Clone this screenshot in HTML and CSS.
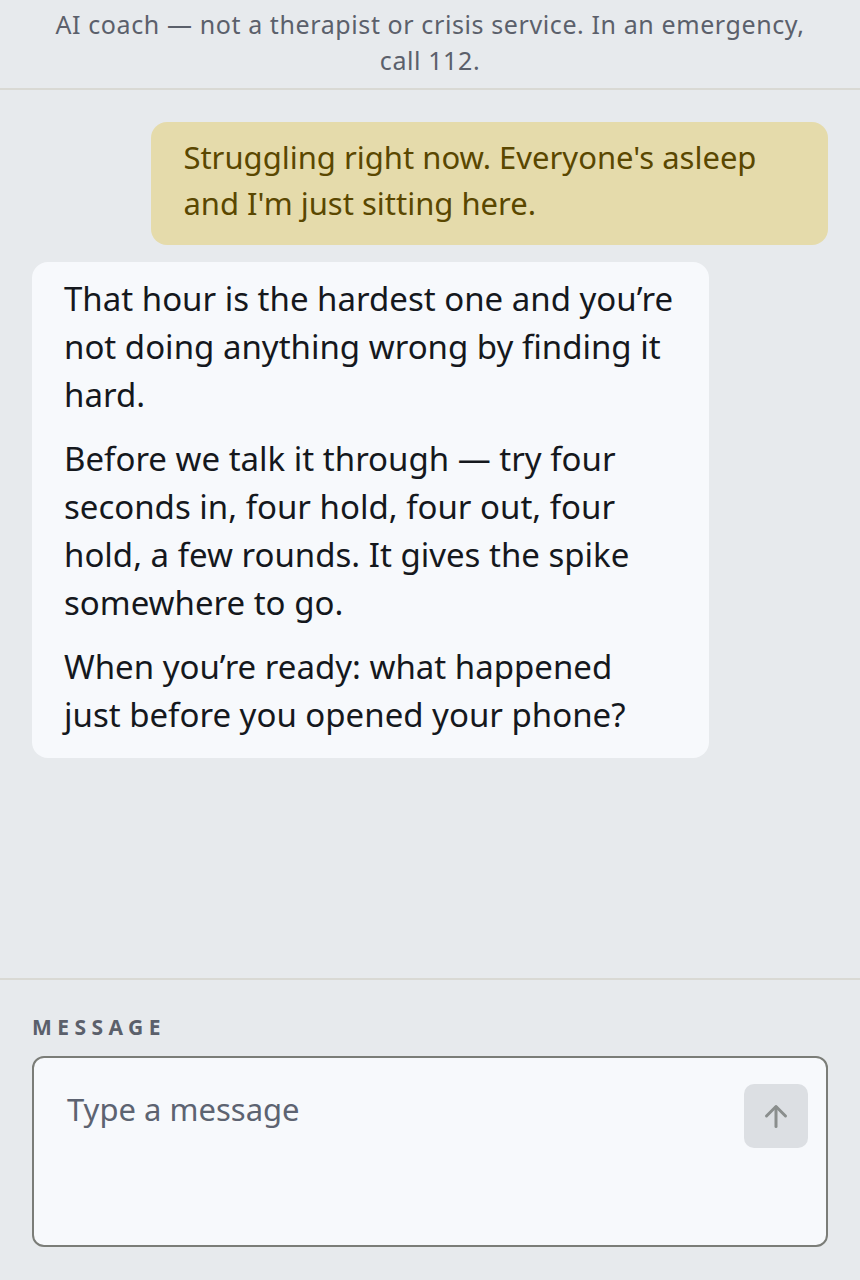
FILE: index.html
```html
<!DOCTYPE html>
<html lang="en">
<head>
  <meta charset="UTF-8">
  <meta name="viewport" content="width=device-width, initial-scale=1.0">
  <title>Coach</title>
  <link rel="stylesheet" href="styles.css">
</head>
<body>
  <div class="notice">AI coach — not a therapist or crisis service. In an emergency, call 112.</div>

  <div class="chat">
    <div class="msg user">Struggling right now. Everyone's asleep and I'm just sitting here.</div>
    <div class="msg coach">
      <p>That hour is the hardest one and you’re not doing anything wrong by finding it hard.</p>
      <p>Before we talk it through — try four seconds in, four hold, four out, four hold, a few rounds. It gives the spike somewhere to go.</p>
      <p>When you’re ready: what happened just before you opened your phone?</p>
    </div>
  </div>

  <div class="composer">
    <label class="composer-label" for="msg">Message</label>
    <div class="input-box">
      <textarea id="msg" class="input" placeholder="Type a message"></textarea>
      <button class="send-button" disabled>
        <svg width="24" height="24" viewBox="0 0 24 24" fill="none" stroke="currentColor" stroke-width="3" stroke-linecap="round" stroke-linejoin="round">
          <path d="M12 22.5V3"/>
          <path d="M2.5 12L12 2.5l9.5 9.5"/>
        </svg>
      </button>
    </div>
  </div>
</body>
</html>
```

FILE: styles.css
```css
html, body {
  height: 100%;
}

body {
  font-family: "Noto Sans", "Open Sans", sans-serif;
  background-color: #e7eaed;
  margin: 0;
  display: flex;
  flex-direction: column;
  height: 100vh;
  overflow: hidden;
}

.notice {
  padding: 6px 48px 10px;
  text-align: center;
  font-size: 25px;
  line-height: 36px;
  letter-spacing: 0.6px;
  color: #5b606b;
  border-bottom: 2px solid #d9d9d4;
}

.chat {
  flex: 1;
  display: flex;
  flex-direction: column;
  gap: 17px;
  padding: 32px 32px;
}

.msg {
  max-width: 85%;
  box-sizing: border-box;
  border-radius: 16px;
}

.msg.user {
  align-self: flex-end;
  padding: 12px 32px 19px;
  background-color: #e5dbab;
  color: #5a4700;
  font-size: 31px;
  line-height: 46px;
}

.msg.coach {
  align-self: flex-start;
  padding: 13px 32px 19px;
  background-color: #f7f9fc;
  color: #15181d;
  font-size: 33px;
  line-height: 48px;
}

.msg p {
  margin: 0;
}

.msg p + p {
  margin-top: 16px;
}

.composer {
  border-top: 2px solid #d9d9d4;
  padding: 32px 32px 33px;
}

.composer-label {
  display: block;
  font-size: 21px;
  line-height: 30px;
  font-weight: 700;
  letter-spacing: 0.26em;
  text-transform: uppercase;
  color: #5b606b;
  margin-bottom: 14px;
}

.input-box {
  position: relative;
}

.input {
  display: block;
  width: 100%;
  height: 191px;
  box-sizing: border-box;
  border: 2px solid #7b7d78;
  border-radius: 12px;
  background-color: #f7f9fc;
  padding: 33px 100px 24px 33px;
  font-family: inherit;
  font-size: 31px;
  line-height: 36px;
  color: #15181d;
  resize: none;
  outline: none;
}

.input::placeholder {
  color: #5d6371;
}

.send-button {
  position: absolute;
  top: 28px;
  right: 20px;
  width: 64px;
  height: 64px;
  border: none;
  border-radius: 10px;
  background-color: #dcdfe3;
  color: #8a8e8d;
  display: flex;
  justify-content: center;
  align-items: center;
  padding: 0;
  cursor: pointer;
}
```
